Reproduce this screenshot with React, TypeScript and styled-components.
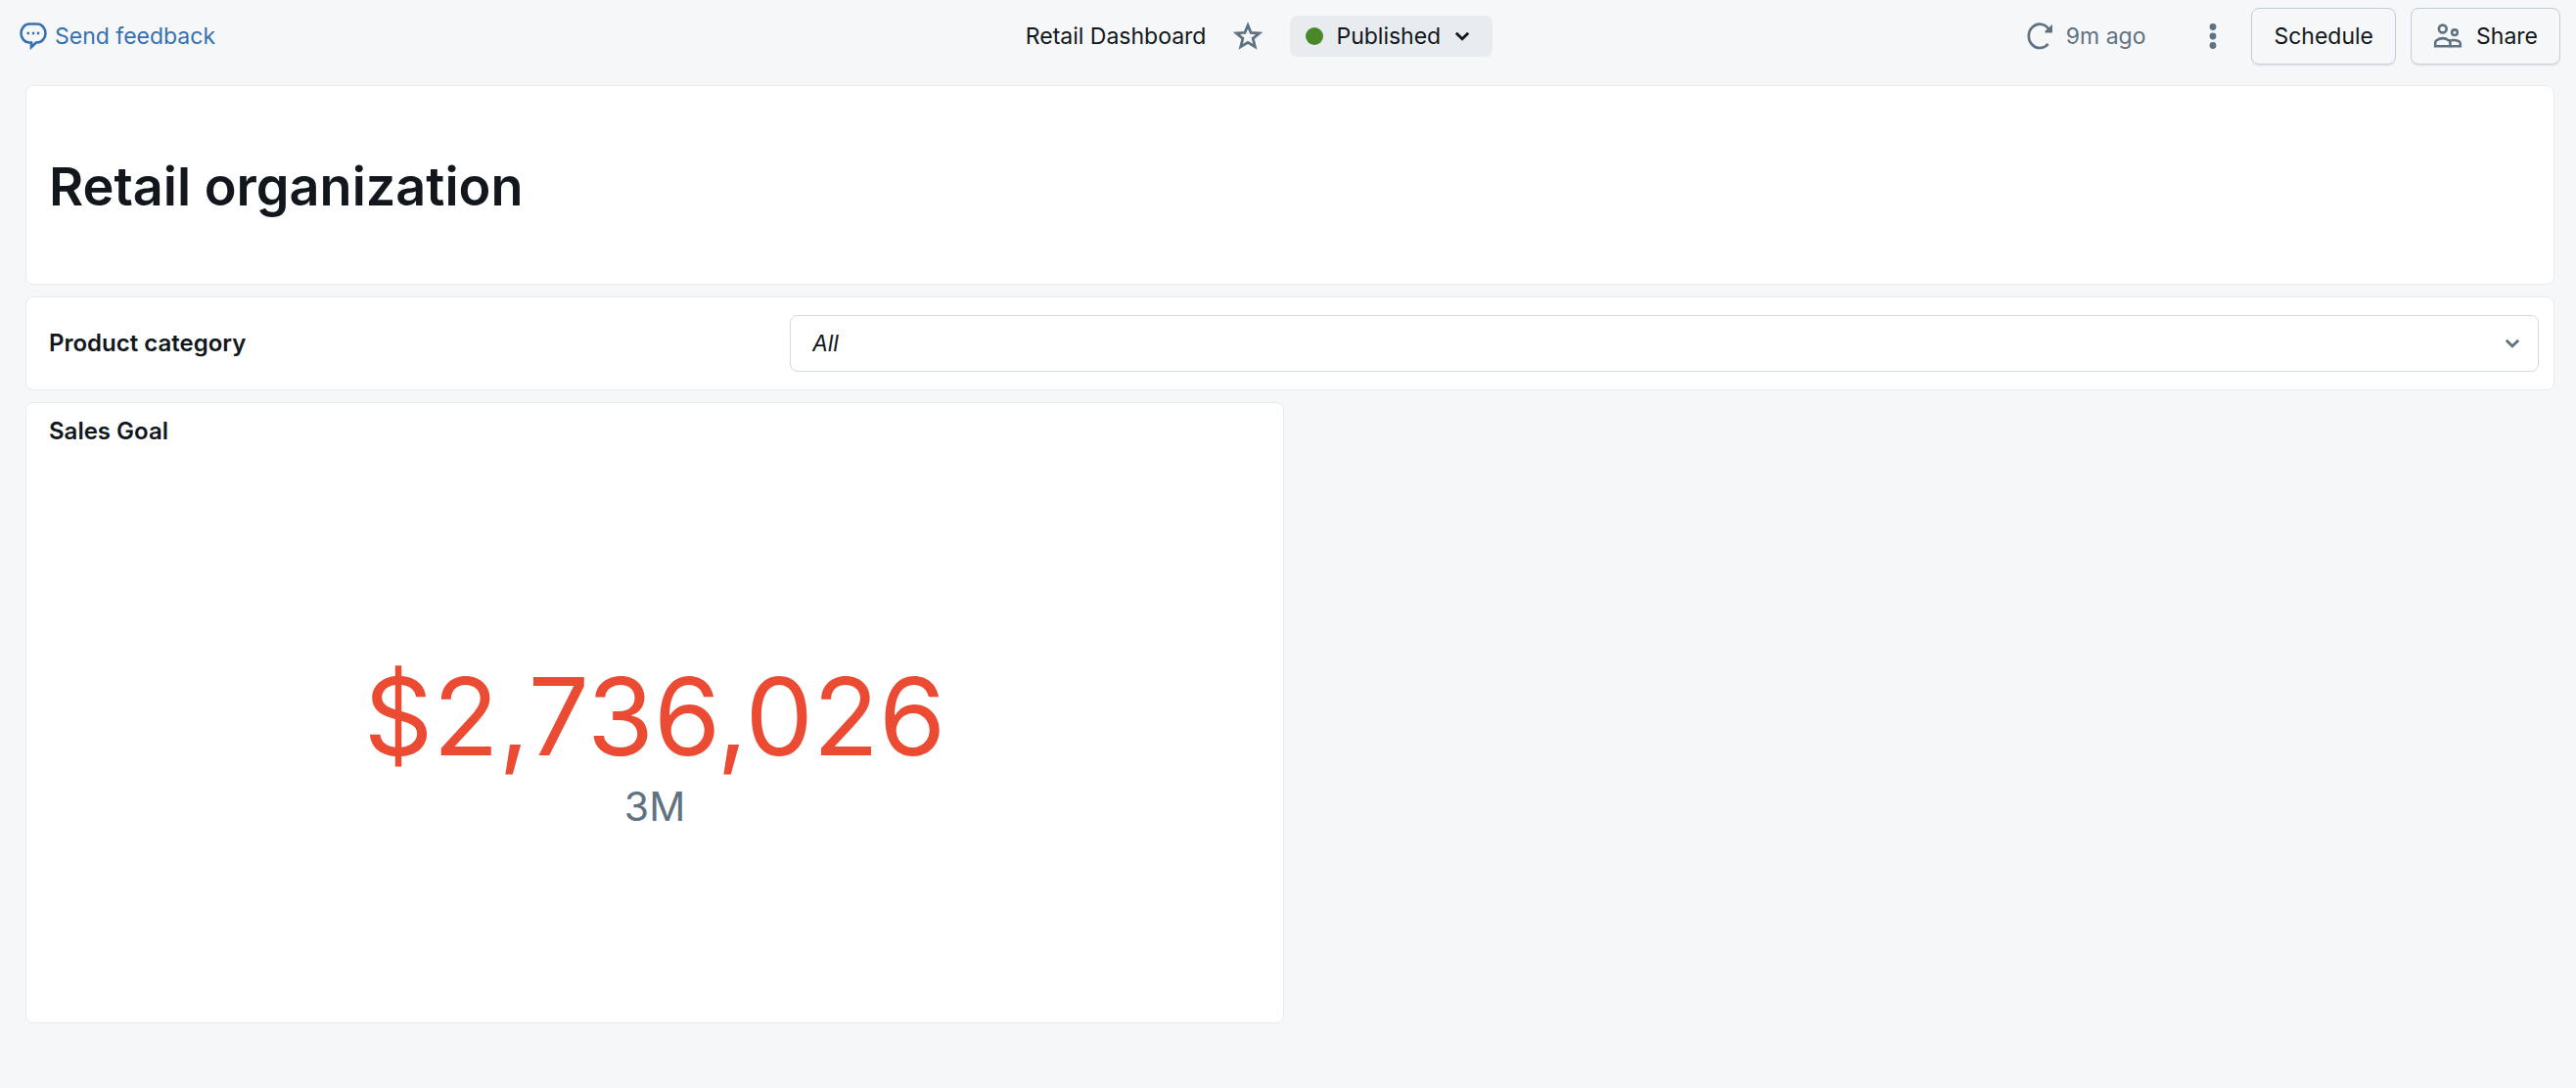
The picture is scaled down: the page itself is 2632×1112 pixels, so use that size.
import React from "react";
import styled, { createGlobalStyle } from "styled-components";

const color = {
  page: "#f5f7f9",
  surface: "#ffffff",
  line: "#e7eaee",
  control: "#d1d9e1",
  button: "#c0cdd8",
  pill: "#e8ecef",
  text: "#11171c",
  muted: "#5f7281",
  link: "#3670b2",
  green: "#4a8729",
  red: "#eb4a33",
};

const GlobalStyle = createGlobalStyle`
  *, *::before, *::after { box-sizing: border-box; }
  body {
    margin: 0;
    background: ${color.page};
    color: ${color.text};
    font-family: Inter, "Liberation Sans", sans-serif;
    font-size: 23px;
    line-height: 32px;
  }
  button, select { font: inherit; color: inherit; }
  button { cursor: pointer; }
`;

const Header = styled.header`
  display: grid;
  grid-template-columns: minmax(0, 1fr) auto minmax(0, 1fr);
  align-items: center;
  padding: 8px 16px 8px 19px;
`;

const FeedbackLink = styled.a`
  display: inline-flex;
  align-items: center;
  justify-self: start;
  gap: 7px;
  color: ${color.link};
  text-decoration: none;
`;

const TitleGroup = styled.div`
  display: flex;
  align-items: center;
  padding-right: 62px;
`;

const DashboardName = styled.span`
  white-space: nowrap;
`;

const IconButton = styled.button`
  display: inline-flex;
  align-items: center;
  justify-content: center;
  width: 48px;
  height: 48px;
  padding: 0;
  border: 0;
  border-radius: 8px;
  background: transparent;
  color: ${color.muted};
`;

const StarButton = styled(IconButton)`
  margin: 0 19px;
`;

const StatusButton = styled.button`
  display: inline-flex;
  align-items: center;
  height: 42px;
  padding: 0 22px 0 16px;
  gap: 13px;
  border: 0;
  border-radius: 8px;
  background: ${color.pill};
`;

const StatusDot = styled.span`
  width: 18px;
  height: 18px;
  border-radius: 50%;
  background: ${color.green};
`;

const Actions = styled.div`
  display: flex;
  align-items: center;
  justify-content: flex-end;
  gap: 15px;
`;

const RefreshButton = styled.button`
  display: inline-flex;
  align-items: center;
  gap: 13px;
  padding: 0;
  margin-right: 30px;
  border: 0;
  background: transparent;
  color: ${color.muted};
  white-space: nowrap;
`;

const ActionButton = styled.button`
  display: inline-flex;
  align-items: center;
  height: 58px;
  padding: 0 22px;
  gap: 14px;
  border: 1px solid ${color.button};
  border-radius: 8px;
  background: transparent;
  box-shadow: 0 2px 0 rgba(17, 23, 28, 0.05);

  svg { color: ${color.muted}; }
`;

const Board = styled.main`
  display: grid;
  grid-template-columns: repeat(2, minmax(0, 1fr));
  gap: 12px;
  padding: 13px 22px 66px 26px;
`;

const Card = styled.section`
  border: 1px solid ${color.line};
  border-radius: 8px;
  background: ${color.surface};
`;

const HeadingCard = styled(Card)`
  grid-column: 1 / -1;
  padding: 70px 23px 66px;
`;

const Heading = styled.h1`
  margin: 0;
  font-size: 54px;
  line-height: 66px;
  font-weight: 600;
`;

const FilterCard = styled(Card)`
  grid-column: 1 / -1;
  display: grid;
  grid-template-columns: 3fr 7fr;
  align-items: center;
  padding: 18px 15px 18px 14px;
`;

const FilterLabel = styled.label`
  padding-left: 9px;
  font-size: 24px;
  font-weight: 600;
`;

const SelectBox = styled.div`
  position: relative;
  display: flex;

  svg {
    position: absolute;
    right: 18px;
    top: 50%;
    transform: translateY(-50%);
    color: ${color.muted};
    pointer-events: none;
  }
`;

const Select = styled.select`
  appearance: none;
  width: 100%;
  height: 58px;
  padding: 0 56px 0 22px;
  border: 1px solid ${color.control};
  border-radius: 8px;
  background: ${color.surface};
  font-style: italic;
`;

const CounterCard = styled(Card)`
  display: flex;
  flex-direction: column;
  padding: 13px 23px;
`;

const CardTitle = styled.h2`
  margin: 0;
  font-size: 24px;
  line-height: 32px;
  font-weight: 600;
`;

const Counter = styled.div`
  display: flex;
  flex-direction: column;
  align-items: center;
  padding: 215px 0 176px;
`;

const CounterValue = styled.div`
  color: ${color.red};
  font-size: 110px;
  line-height: 120px;
`;

const CounterTarget = styled.div`
  color: ${color.muted};
  font-size: 41px;
  line-height: 64px;
`;

const ChatIcon = () => (
  <svg width="30" height="30" viewBox="0 0 30 30" fill="none" aria-hidden="true">
    <path
      d="M11 2.5h8a8.5 9.5 0 0 1 0 19h-1.2l-4.8 4.6v-4.6h-2a8.5 9.5 0 0 1 0-19Z"
      stroke="currentColor"
      strokeWidth="2.6"
    />
    <path d="M8.6 10.8h2.4v2.4H8.6zM13.800 10.800h2.400v2.400h-2.400zM18.800 10.800h2.400v2.400h-2.400z" fill="currentColor" />
  </svg>
);

const StarIcon = () => (
  <svg width="30" height="30" viewBox="0 0 28 28" fill="none" aria-hidden="true">
    <path
      d="M14 3.600l2.900 7.100 7.900.5-6 5 2 7.900L14 19.900l-6.800 4.200 2-7.900-6-5 7.900-.5Z"
      stroke="currentColor"
      strokeWidth="2.600"
    />
  </svg>
);

const ChevronIcon = () => (
  <svg width="18" height="18" viewBox="0 0 18 18" fill="none" aria-hidden="true">
    <path d="M2.800 5.800 9 11.800l6.200-6" stroke="currentColor" strokeWidth="2.800" />
  </svg>
);

const RefreshIcon = () => (
  <svg width="27" height="28" viewBox="0 0 27 28" fill="none" aria-hidden="true">
    <path d="M22 6.300A11.300 12.200 0 1 0 21.600 21.900" stroke="currentColor" strokeWidth="2.600" />
    <path d="M26 2v8.600h-7.500V8.800Z" fill="currentColor" />
  </svg>
);

const KebabIcon = () => (
  <svg width="28" height="28" viewBox="0 0 28 28" fill="currentColor" aria-hidden="true">
    <circle cx="14" cy="4.500" r="3.400" />
    <circle cx="14" cy="14" r="3.400" />
    <circle cx="14" cy="23.500" r="3.400" />
  </svg>
);

const PeopleIcon = () => (
  <svg width="30" height="28" viewBox="0 0 30 28" fill="none" stroke="currentColor" strokeWidth="2.600" aria-hidden="true">
    <circle cx="9.800" cy="6.500" r="3.900" />
    <circle cx="22" cy="10.200" r="2.800" />
    <path d="M2.200 24.300v-3.500c0-1 .5-1.900 1.300-2.500a11 11 0 0 1 12.600 0c.8.600 1.300 1.500 1.300 2.500v3.500Z" />
    <path d="M16.300 18.800c3-1 6.900-.9 9.600.2 1.200.5 1.900 1.200 1.900 2.400v2.900H17.400" />
  </svg>
);

export default function App() {
  return (
    <>
      <GlobalStyle />
      <Header>
        <FeedbackLink href="#feedback">
          <ChatIcon />
          Send feedback
        </FeedbackLink>
        <TitleGroup>
          <DashboardName>Retail Dashboard</DashboardName>
          <StarButton type="button" aria-label="Add to favorites">
            <StarIcon />
          </StarButton>
          <StatusButton type="button">
            <StatusDot />
            Published
            <ChevronIcon />
          </StatusButton>
        </TitleGroup>
        <Actions>
          <RefreshButton type="button">
            <RefreshIcon />
            9m ago
          </RefreshButton>
          <IconButton type="button" aria-label="More options">
            <KebabIcon />
          </IconButton>
          <ActionButton type="button">Schedule</ActionButton>
          <ActionButton type="button">
            <PeopleIcon />
            Share
          </ActionButton>
        </Actions>
      </Header>
      <Board>
        <HeadingCard>
          <Heading>Retail organization</Heading>
        </HeadingCard>
        <FilterCard>
          <FilterLabel htmlFor="product-category">Product category</FilterLabel>
          <SelectBox>
            <Select id="product-category" defaultValue="all">
              <option value="all">All</option>
            </Select>
            <ChevronIcon />
          </SelectBox>
        </FilterCard>
        <CounterCard>
          <CardTitle>Sales Goal</CardTitle>
          <Counter>
            <CounterValue>$2,736,026</CounterValue>
            <CounterTarget>3M</CounterTarget>
          </Counter>
        </CounterCard>
      </Board>
    </>
  );
}
